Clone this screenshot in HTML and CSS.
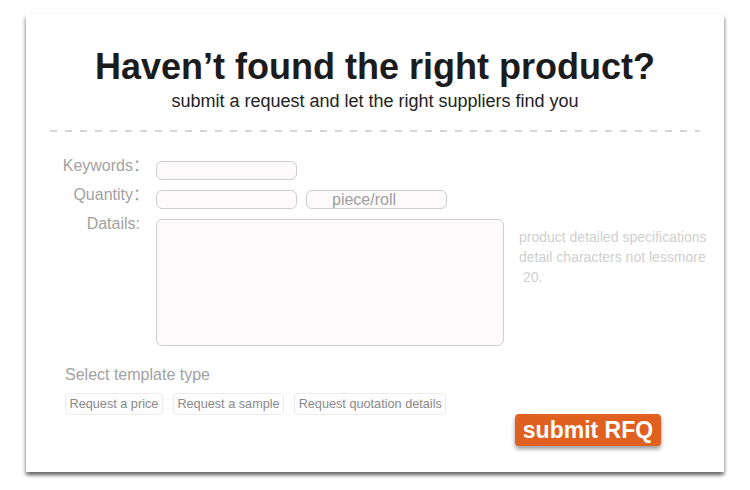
FILE: index.html
```html
<!DOCTYPE html>
<html lang="en">
<head>
<meta charset="utf-8">
<title>Request for Quotation</title>
<link rel="stylesheet" href="styles.css">
</head>
<body>
<div class="card">
  <h1 class="title">Haven’t found the right product?</h1>
  <p class="subtitle">submit a request and let the right suppliers find you</p>
  <div class="divider"></div>
  <div class="form">
    <div class="row">
      <label class="label">Keywords：</label>
      <div class="field"></div>
    </div>
    <div class="row">
      <label class="label">Quantity：</label>
      <div class="field"></div>
      <div class="field unit">piece/roll</div>
    </div>
    <div class="row">
      <label class="label label-details">Datails:</label>
      <div class="field area"></div>
      <p class="hint">product detailed specifications<br>detail characters not lessmore<br>&nbsp;20.</p>
    </div>
  </div>
  <div class="template">
    <div class="template-title">Select template type</div>
    <div class="chips">
      <span class="chip">Request a price</span>
      <span class="chip">Request a sample</span>
      <span class="chip">Request quotation details</span>
    </div>
  </div>
  <div class="actions">
    <button class="submit">submit RFQ</button>
  </div>
</div>
</body>
</html>
```

FILE: styles.css
```css
* { box-sizing: border-box; }
html, body {
  margin: 0;
  padding: 0;
  background: #ffffff;
}
body {
  font-family: "Liberation Sans", Arial, "Noto Sans CJK SC", sans-serif;
  width: 750px;
  height: 490px;
  overflow: hidden;
}
.card {
  margin: 14px 0 0 26px;
  width: 698px;
  height: 458px;
  background: #ffffff;
  box-shadow: 0 3px 4px rgba(0, 0, 0, 0.45),
              -2px 4px 3px -1px rgba(0, 0, 0, 0.14),
              2px 4px 3px -1px rgba(0, 0, 0, 0.14);
  padding-top: 33px;
}
.title {
  margin: 0;
  font-size: 36px;
  line-height: 40px;
  font-weight: bold;
  color: #1c1c1c;
  text-align: center;
}
.subtitle {
  margin: 3px 0 0;
  font-size: 18px;
  line-height: 22px;
  color: #222222;
  text-align: center;
}
.divider {
  margin: 18px 24px 0;
  height: 2px;
  background: repeating-linear-gradient(to right, #d6d6d6 0 7px, transparent 7px 15px);
}
.form {
  margin-top: 28.5px;
  display: flex;
  flex-direction: column;
  gap: 10px;
}
.row {
  display: flex;
  align-items: flex-start;
}
.label {
  width: 123px;
  margin-right: 7px;
  margin-top: -4.5px;
  text-align: right;
  font-size: 16px;
  line-height: 20px;
  color: #a2a2a2;
  flex-shrink: 0;
}
.label-details {
  padding-right: 9px;
}
.field {
  width: 141px;
  height: 19px;
  border: 1px solid #cfcfcf;
  border-radius: 6px;
  background: #fcfafa;
  flex-shrink: 0;
}
.unit {
  margin-left: 9px;
  padding-left: 25px;
  font-size: 16px;
  line-height: 17px;
  color: #a0a0a0;
}
.area {
  width: 348px;
  height: 127px;
}
.hint {
  margin: 8.5px 0 0 15px;
  font-size: 14px;
  line-height: 20px;
  color: #cfcfcf;
}
.template {
  margin: 19.5px 0 0 39px;
}
.template-title {
  font-size: 16px;
  line-height: 20px;
  color: #a2a2a2;
}
.chips {
  margin-top: 7.5px;
  display: flex;
  gap: 10px;
}
.chip {
  height: 22px;
  padding: 0 3.5px;
  border: 1px solid #ececec;
  border-radius: 4px;
  background: #fdfdfd;
  font-size: 12.7px;
  line-height: 20px;
  color: #8a8a8a;
}
.actions {
  margin-top: -1px;
  display: flex;
  justify-content: flex-end;
  padding-right: 63px;
}
.submit {
  width: 146px;
  height: 32px;
  padding: 0;
  border: none;
  border-radius: 4px;
  background: #e0601f;
  color: #ffffff;
  font-family: "Liberation Sans", Arial, sans-serif;
  font-size: 23px;
  font-weight: bold;
  line-height: 32px;
  text-align: center;
  box-shadow: 0 3px 4px rgba(0, 0, 0, 0.4);
  cursor: pointer;
}
```
